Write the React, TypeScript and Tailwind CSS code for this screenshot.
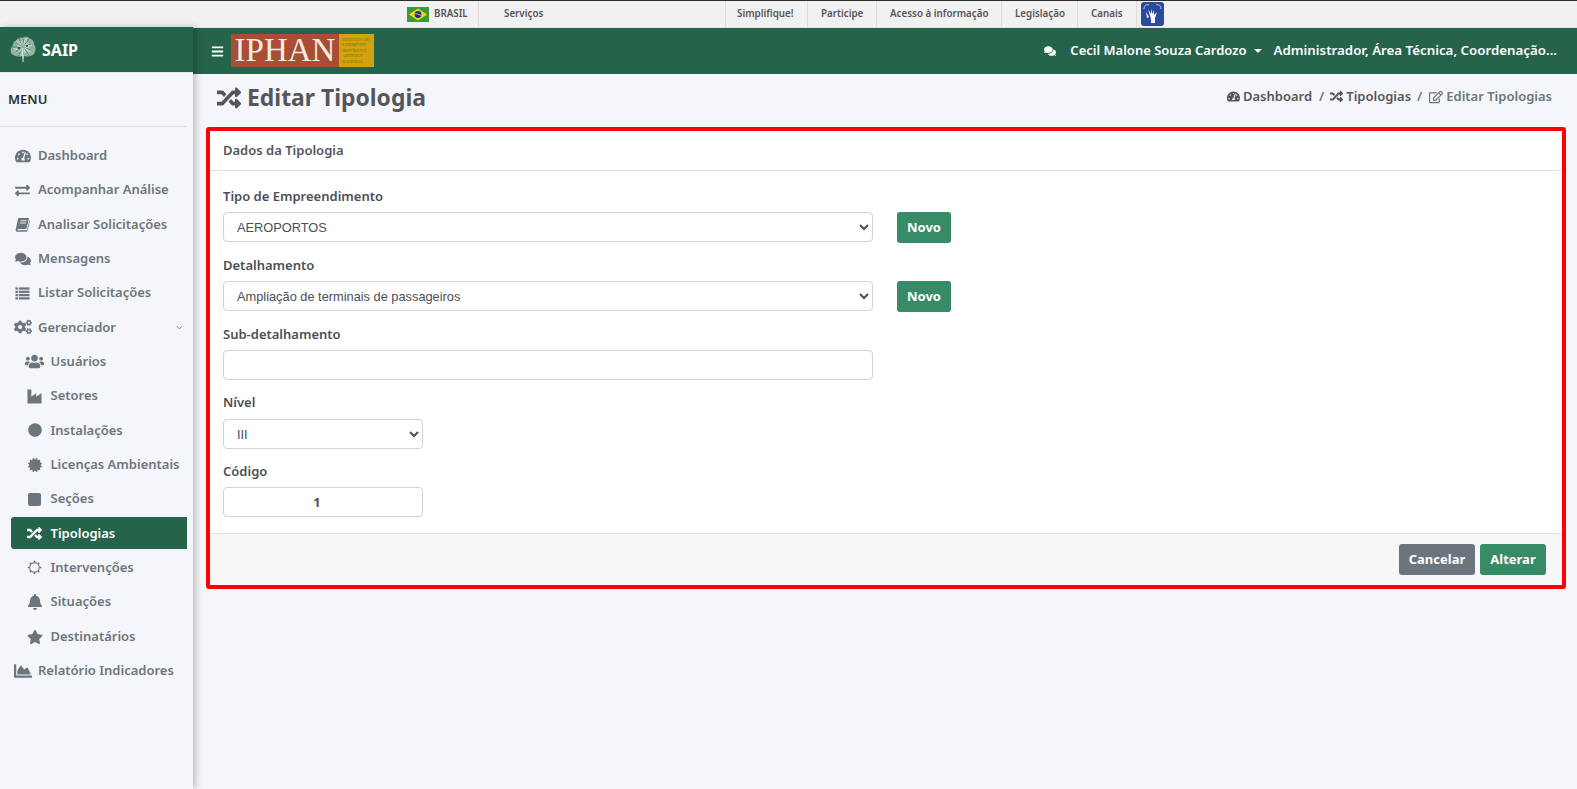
import React from "react";
import {
  FaTachometerAlt, FaExchangeAlt, FaComments, FaCogs, FaUsers,
  FaCircle, FaCertificate, FaRandom, FaBell, FaStar, FaChartArea, FaBars, FaRegEdit,
} from "react-icons/fa";
import { ChevronDown } from "lucide-react";

type IconProps = { size?: number; className?: string };

function OldBook({ size = 15 }: IconProps) {
  return (
    <svg width={size} height={size} viewBox="0 0 16 16" fill="currentColor" aria-hidden="true">
      <path d="M4.6 1 H15 L12.4 11.6 C12.2 12.4 11.7 12.8 10.9 12.8 H3.4 C2.8 12.8 2.5 13.2 2.6 13.6 C2.7 14 3 14.2 3.5 14.2 H12.6 L15.4 3.4 L16 4 L13.3 14.6 C13.1 15.4 12.6 15.8 11.8 15.8 H3.2 C1.6 15.8 0.5 14.6 0.7 13.2 L3.2 2.4 C3.4 1.6 3.9 1 4.6 1 Z" />
      <path d="M6 4 H12.2 M5.4 6.4 H11.6" stroke="#f4f6f9" strokeWidth="1" fill="none" />
    </svg>
  );
}

function OldList({ size = 15 }: IconProps) {
  return (
    <svg width={size} height={size} viewBox="0 0 16 16" fill="currentColor" aria-hidden="true">
      {[1.5, 5, 8.5, 12].map((y) => (
        <g key={y}>
          <rect x="0.5" y={y} width="2.6" height="2.4" />
          <rect x="4" y={y} width="11.5" height="2.4" />
        </g>
      ))}
    </svg>
  );
}

function OldIndustry({ size = 15 }: IconProps) {
  return (
    <svg width={size} height={size} viewBox="0 0 16 16" fill="currentColor" aria-hidden="true">
      <path d="M0.5 0.5 H4.6 V8 L9.8 4.6 V8 L15.5 4.4 V15.5 H0.5 Z" />
    </svg>
  );
}

function OldSquare({ size = 13 }: IconProps) {
  return <span className="block rounded-[2px] bg-current" style={{ width: size, height: size }} />;
}

function SunOutline({ size = 15 }: IconProps) {
  const spikes = [0, 45, 90, 135, 180, 225, 270, 315];
  return (
    <svg width={size} height={size} viewBox="0 0 16 16" aria-hidden="true">
      <circle cx="8" cy="8" r="5.2" fill="none" stroke="currentColor" strokeWidth="1.1" />
      {spikes.map((a) => (
        <rect key={a} x="7.2" y="0.8" width="1.6" height="1.8" fill="currentColor" transform={`rotate(${a} 8 8)`} />
      ))}
    </svg>
  );
}

const menu: { label: string; Icon: React.ComponentType<IconProps>; size: number; sub?: boolean; active?: boolean; chevron?: boolean }[] = [
  { label: "Dashboard", Icon: FaTachometerAlt, size: 16 },
  { label: "Acompanhar Análise", Icon: FaExchangeAlt, size: 15 },
  { label: "Analisar Solicitações", Icon: OldBook, size: 15 },
  { label: "Mensagens", Icon: FaComments, size: 16 },
  { label: "Listar Solicitações", Icon: OldList, size: 15 },
  { label: "Gerenciador", Icon: FaCogs, size: 18, chevron: true },
  { label: "Usuários", Icon: FaUsers, size: 19, sub: true },
  { label: "Setores", Icon: OldIndustry, size: 15, sub: true },
  { label: "Instalações", Icon: FaCircle, size: 14, sub: true },
  { label: "Licenças Ambientais", Icon: FaCertificate, size: 14, sub: true },
  { label: "Seções", Icon: OldSquare, size: 13, sub: true },
  { label: "Tipologias", Icon: FaRandom, size: 15, sub: true, active: true },
  { label: "Intervenções", Icon: SunOutline, size: 15, sub: true },
  { label: "Situações", Icon: FaBell, size: 16, sub: true },
  { label: "Destinatários", Icon: FaStar, size: 16, sub: true },
  { label: "Relatório Indicadores", Icon: FaChartArea, size: 18 },
];

const gov = [
  { label: "Serviços", w: "w-[247px]", pad: "pl-[25px]" },
  { label: "Simplifique!", w: "w-[82px]", pad: "pl-[11px]" },
  { label: "Participe", w: "w-[69px]", pad: "pl-[13px]" },
  { label: "Acesso à informação", w: "w-[125px]", pad: "pl-[13px]" },
  { label: "Legislação", w: "w-[76px]", pad: "pl-[13px]" },
  { label: "Canais", w: "w-[59px]", pad: "pl-[13px]" },
];

function Emblem() {
  const rays = Array.from({ length: 34 }, (_, i) => i);
  return (
    <svg width="26" height="27" viewBox="0 0 26 27" aria-hidden="true">
      <path d="M13 26 L12 20 C8 21 3 20 1 17 C0 14 1 11 3 9 C3 6 5 5 7 4 C9 2 11 1 13 2 C15 0 18 1 19 2 C22 3 24 5 24 8 C26 11 26 15 24 18 C22 20 18 21 14 20 Z" fill="#8fb3a2" />
      {rays.map((i) => {
        const a = (i / 34) * Math.PI * 2;
        const r = 6 + ((i * 7) % 6);
        return (
          <line
            key={i}
            x1={13 + Math.cos(a) * 2}
            y1={11 + Math.sin(a) * 2}
            x2={13 + Math.cos(a) * r}
            y2={11 + Math.sin(a) * r}
            stroke={i % 3 === 0 ? "#dfeae5" : i % 3 === 1 ? "#b9d0c5" : "#4f8269"}
            strokeWidth="0.9"
          />
        );
      })}
      <path d="M13 26 V12" stroke="#dfeae5" strokeWidth="0.9" />
      <circle cx="9" cy="12" r="1.3" fill="#25634a" />
      <circle cx="17" cy="10" r="1.1" fill="#25634a" />
    </svg>
  );
}

function Flag() {
  return (
    <svg width="22" height="15" viewBox="0 0 22 15" aria-hidden="true">
      <rect width="22" height="15" fill="#3a9a3c" />
      <path d="M11 1.5 L20 7.5 L11 13.5 L2 7.5 Z" fill="#f4d60f" />
      <circle cx="11" cy="7.5" r="3.4" fill="#1c2f7a" />
      <path d="M7.8 6.8 C9.5 6.6 12 7.2 14.2 8.6" stroke="#fff" strokeWidth="0.7" fill="none" />
    </svg>
  );
}

function Libras() {
  return (
    <svg width="23" height="24" viewBox="0 0 23 24" aria-hidden="true">
      <rect width="23" height="24" rx="3" fill="#2a4a9c" />
      <path d="M3 7 C3 3 6 2 8 3 M20 7 C20 3 17 2 15 3" stroke="#dfe6f5" strokeWidth="0.8" fill="none" />
      <path d="M7 7 L10 12 L10 7 L11.5 12 L13 8 L13 13 L16 10 L14 16 L14 21 L10 21 L10 17 Z" fill="#fff" />
      <path d="M5 10 L8 15 L6 16 Z" fill="#fff" />
    </svg>
  );
}

function Logo() {
  return (
    <div className="flex h-[33px] ml-[7px] -mt-px">
      <div className="w-[108px] bg-[#a94e33] flex items-center justify-center">
        <span className="font-['Liberation_Serif',serif] text-[33px] leading-none text-[#f3ebe4]">IPHAN</span>
      </div>
      <div className="w-[35px] bg-[#d1a40f] flex flex-col justify-center pl-[3px] font-['Liberation_Serif',serif] text-[4px] leading-[5.4px] text-[#7d6a10] whitespace-nowrap">
        <span>INSTITUTO DO</span>
        <span>PATRIMÔNIO</span>
        <span>HISTÓRICO E</span>
        <span>ARTÍSTICO</span>
        <span>NACIONAL</span>
      </div>
    </div>
  );
}

function Field({ label, className, labelClass, children }: { label: string; className?: string; labelClass?: string; children: React.ReactNode }) {
  return (
    <div className={className}>
      <label className={`block text-[13px] leading-[20px] font-semibold text-[#4c4f56] ${labelClass ?? "mb-[6px]"}`}>{label}</label>
      {children}
    </div>
  );
}

const control =
  "block h-[30px] bg-white border border-[#ced4da] rounded-[4px] font-['Liberation_Sans',sans-serif] text-[12.8px] text-[#495057]";

function NovoButton() {
  return (
    <button className="ml-[24px] w-[54px] h-[31px] rounded-[3px] bg-[#378b66] text-white text-[13px] font-bold">Novo</button>
  );
}

export default function App() {
  return (
    <div className="min-h-[789px] bg-[#f4f6f9] font-['Noto_Sans',sans-serif] flex flex-col">
      <div className="h-[28px] bg-[#f1f1f1] border-t border-[#2b2b2b] border-b border-b-[#e2e2e2] flex items-stretch pl-[407px] text-[9.8px] font-semibold text-[#555]">
        <div className="w-[72px] flex items-center gap-[5px] border-r border-[#dcdcdc]">
          <Flag />
          <span>BRASIL</span>
        </div>
        {gov.map((g) => (
          <div key={g.label} className={`${g.w} ${g.pad} flex items-center border-r border-[#dcdcdc]`}>
            {g.label}
          </div>
        ))}
        <div className="flex items-center pl-[4px]">
          <Libras />
        </div>
      </div>

      <div className="flex flex-1">
        <aside className="w-[193px] shrink-0 -mt-px relative z-10 bg-[#f4f6f9] shadow-[3px_0_6px_rgba(0,0,0,0.22)]">
          <div className="h-[46px] bg-[#25634a] flex items-center pl-[10px] gap-[6px] text-white text-[16px] font-bold border-b border-[#e4e8e6]">
            <Emblem />
            <span>SAIP</span>
          </div>
          <div className="h-[54px] flex items-center pl-[8px] text-[13px] font-semibold text-[#2b2f36] border-b border-[#dfe1e5] mr-[6px]">MENU</div>
          <nav className="pt-[12.7px] pr-[6px]">
            {menu.map(({ label, Icon, size, sub, active, chevron }) => (
              <div
                key={label}
                className={`h-[32px] mb-[2.35px] flex items-center text-[13px] font-semibold ${
                  sub ? "pl-[16px] ml-[11px]" : "pl-[15px]"
                } ${active ? "bg-[#25634a] text-white rounded-l-[3px] font-bold" : "text-[#6c757d]"}`}
              >
                <span className="w-[15px] flex justify-center shrink-0">
                  <span className="shrink-0">
                    <Icon size={size} />
                  </span>
                </span>
                <span className={`${sub ? "ml-[8.5px]" : "ml-[8px]"} flex-1 whitespace-nowrap`}>{label}</span>
                {chevron && <ChevronDown size={11} className="mr-[2px]" />}
              </div>
            ))}
          </nav>
        </aside>

        <div className="flex-1 min-w-0">
          <header className="h-[46px] bg-[#25634a] flex items-center text-white pl-[18px] pr-[20px]">
            <FaBars size={13} />
            <Logo />
            <div className="ml-auto flex items-center text-[13px] font-semibold whitespace-nowrap">
              <FaComments size={12} />
              <span className="ml-[14px]">Cecil Malone Souza Cardozo</span>
              <span className="ml-[7px] w-0 h-0 border-x-[4px] border-x-transparent border-t-[4px] border-t-white" />
              <span className="ml-[12px] text-[13.3px]">Administrador, Área Técnica, Coordenação...</span>
            </div>
          </header>

          <main className="pl-[13px] pr-[11px]">
            <div className="h-[53px] flex items-center justify-between pl-[11px] pr-[14px]">
              <h1 className="flex items-center gap-[6px] text-[22.9px] font-bold text-[#55565b] -mt-[4px]">
                <FaRandom size={24} />
                Editar Tipologia
              </h1>
              <div className="flex items-center text-[13px] font-semibold text-[#55565b] -mt-[8px]">
                <FaTachometerAlt size={13} />
                <span className="ml-[3px] mr-px">Dashboard</span>
                <span className="mx-[6px] text-[#6c757d]">/</span>
                <FaRandom size={13} />
                <span className="ml-[3px]">Tipologias</span>
                <span className="ml-[6px] mr-[7px] text-[#6c757d]">/</span>
                <FaRegEdit size={14} className="text-[#6c757d]" />
                <span className="ml-[3px] text-[#6c757d]">Editar Tipologias</span>
              </div>
            </div>

            <section className="border-[4px] border-[#ff0000] rounded-[3px] bg-white">
              <div className="h-[40px] pl-[13px] pt-[1px] flex items-center text-[13px] font-semibold text-[#55565b] border-b border-[#dfe1e5]">
                Dados da Tipologia
              </div>
              <div className="pt-[15px] pb-[16px] px-[13px] flex flex-col gap-[13px]">
                <Field label="Tipo de Empreendimento">
                  <div className="flex items-start h-[30px]">
                    <select defaultValue="a" className={`${control} w-[650px] px-[9px]`}>
                      <option value="a">AEROPORTOS</option>
                    </select>
                    <NovoButton />
                  </div>
                </Field>
                <Field label="Detalhamento">
                  <div className="flex items-start h-[30px]">
                    <select defaultValue="a" className={`${control} w-[650px] px-[9px]`}>
                      <option value="a">Ampliação de terminais de passageiros</option>
                    </select>
                    <NovoButton />
                  </div>
                </Field>
                <Field label="Sub-detalhamento">
                  <input defaultValue="" className={`${control} w-[650px] px-[12px]`} />
                </Field>
                <Field label="Nível" className="-mt-px" labelClass="mb-[7px]">
                  <select defaultValue="a" className={`${control} w-[200px] px-[9px]`}>
                    <option value="a">III</option>
                  </select>
                </Field>
                <Field label="Código" className="-mt-px">
                  <input defaultValue="1" className={`${control} w-[200px] pr-[12px] text-center font-['Noto_Sans',sans-serif] font-bold text-[#3f4a66]`} />
                </Field>
              </div>
              <div className="h-[52px] bg-[#f7f7f7] border-t border-[#dfe1e5] flex items-center justify-end gap-[5px] pr-[16px]">
                <button className="w-[76px] h-[31px] rounded-[3px] bg-[#6c757d] text-white text-[13px] font-bold">Cancelar</button>
                <button className="w-[66px] h-[31px] rounded-[3px] bg-[#378b66] text-white text-[13px] font-bold">Alterar</button>
              </div>
            </section>
          </main>
        </div>
      </div>
    </div>
  );
}
